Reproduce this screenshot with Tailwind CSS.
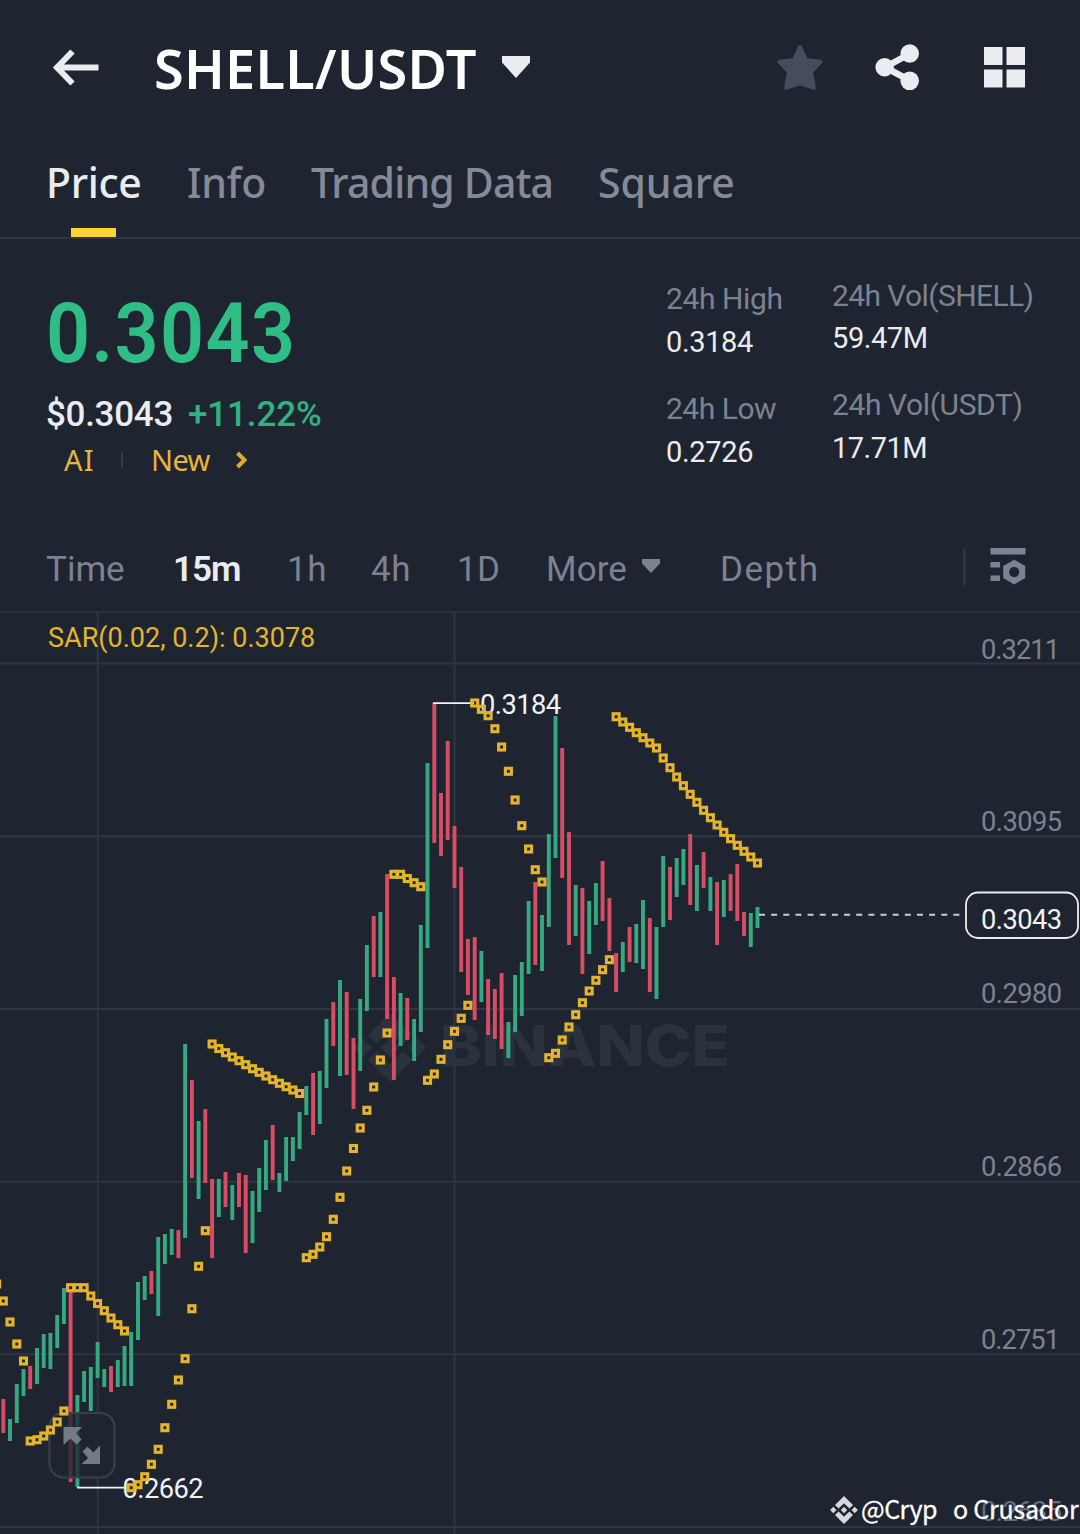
<!DOCTYPE html>
<html lang="en">
<head>
<meta charset="utf-8">
<title>SHELL/USDT</title>
<script src="https://cdn.jsdelivr.net/npm/@tailwindcss/browser@4"></script>
</head>
<body class="w-[1080px] h-[1534px] overflow-hidden bg-[#1f2530] text-[#eaecef] font-[Roboto,sans-serif]">

<!-- Header -->
<header class="flex items-center h-[134px] pl-[52px] pr-[54px] font-['Noto_Sans',sans-serif]">
  <svg class="w-12 h-10 shrink-0" viewBox="52 47.500 48 40" fill="none" stroke="#eaecef" stroke-width="6"><path d="M98.500 68H57M72.500 52 57 68l15.500 16"/></svg>
  <h1 class="ml-[54px] mt-0.5 w-[347px] text-[54px] leading-[60px] font-semibold tracking-[0.3px] text-white">SHELL/USDT</h1>
  <svg class="w-[30px] h-6 shrink-0" viewBox="0 0 30 24" fill="#eaecef"><path d="M1 1h28v6.500L15 23 1 7.500z"/></svg>
  <div class="ml-auto flex items-center">
    <svg class="w-[46px] h-[48px]" viewBox="0 0 46 48" fill="#464c59"><path d="M23 2c1 0 1.800.8 2.300 1.900l5 11.400 13.200 1.500c2 .2 2.600 2 1.300 3.400l-8.600 9.300 2.600 15c.3 1.900-1 2.900-2.700 2L23 42.500 9.900 46.500c-1.700.9-3-.1-2.700-2l2.600-15-8.600-9.300c-1.300-1.400-.7-3.200 1.300-3.400l13.200-1.500 5-11.400C21.200 2.800 22 2 23 2z"/></svg>
    <svg class="ml-[50px] w-[48px] h-[48px]" viewBox="873 43.500 48 48" fill="#eaecef"><path d="M909.500 54.500 885 67.700l24.500 13.200" fill="none" stroke="#eaecef" stroke-width="6.500"/><circle cx="909.700" cy="54" r="9.300"/><circle cx="884.600" cy="67.700" r="9.200"/><circle cx="909.700" cy="81.300" r="9.300"/></svg>
    <svg class="ml-[61px] w-11 h-11" viewBox="982 45.500 44 44" fill="#eaecef"><path d="M984 47.500h18.500v18H984zM1006.500 47.500H1025v18h-18.500zM984 70h18.500v18H984zM1006.500 70H1025v18h-18.500z"/></svg>
  </div>
</header>

<!-- Tabs -->
<nav class="relative flex h-[105px] pl-[46px] border-b-2 border-[#2f3641] text-[41px] leading-[96px] font-medium text-[#848a96] font-['Noto_Sans',sans-serif] whitespace-nowrap">
  <span class="w-[141px] tracking-[-0.3px] text-[#eaecef]">Price</span>
  <span class="w-[124px] tracking-[-0.2px]">Info</span>
  <span class="w-[287px] tracking-[-0.8px]">Trading Data</span>
  <span class="tracking-[-0.1px]">Square</span>
  <i class="absolute left-[71px] bottom-0 w-[45px] h-[9px] bg-[#fcd535]"></i>
</nav>

<!-- Ticker -->
<section class="flex h-[287px] whitespace-nowrap">
  <div class="w-[666px] pl-[45px] pt-[53px]">
    <div class="pl-px origin-left scale-x-[0.92] text-[84px] leading-[84px] font-semibold tracking-[1.4px] text-[#2ebd85]">0.3043</div>
    <div class="mt-[21px] pl-px flex text-[35px] leading-9 font-medium">
      <span class="w-[142px] tracking-[-0.3px]">$0.3043</span>
      <span class="tracking-[-0.12px] text-[#2fb380]">+11.22%</span>
    </div>
    <div class="mt-[9px] pl-[19px] flex items-center text-[29px] leading-9 text-[#e8b53a]">
      <span class="w-[57px] tracking-[1.2px] font-['Noto_Sans',sans-serif]">AI</span>
      <i class="w-[2px] h-3.5 bg-[#363c48]"></i>
      <span class="ml-7 w-[84px] tracking-[-0.6px] font-['Noto_Sans',sans-serif]">New</span>
      <svg class="w-3.5 h-5" viewBox="0 0 14 20" fill="none" stroke="#e0a92a" stroke-width="4"><path d="m2.500 3 7 7-7 7"/></svg>
    </div>
  </div>
  <div class="w-[166px] pt-[38px] leading-[43px] text-[29px]">
    <div class="text-[30px] tracking-[-0.4px] text-[#7c828f]">24h High</div>
    <div class="pt-px tracking-[-0.37px]">0.3184</div>
    <div class="mt-[23px] text-[30px] tracking-[-0.49px] text-[#7c828f]">24h Low</div>
    <div class="pt-px tracking-[-0.3px]">0.2726</div>
  </div>
  <div class="pt-[35px] leading-[43px] text-[29px]">
    <div class="text-[30px] tracking-[-0.6px] text-[#7c828f]">24h Vol(SHELL)</div>
    <div class="tracking-[-0.4px]">59.47M</div>
    <div class="mt-[23px] text-[30px] tracking-[-0.4px] text-[#7c828f]">24h Vol(USDT)</div>
    <div class="pt-px tracking-[-0.5px]">17.71M</div>
  </div>
</section>

<!-- Intervals -->
<nav class="flex items-center h-[87px] pl-[46px] pr-[54px] border-b-2 border-[#2a303b] text-[35px] text-[#7c828f] whitespace-nowrap">
  <span class="mt-1 w-[127px]">Time</span>
  <span class="mt-1 w-[114px] tracking-[-1px] font-semibold text-[#eaecef]">15m</span>
  <span class="mt-1 w-[84px] tracking-[0.6px]">1h</span>
  <span class="mt-1 w-[86px] tracking-[0.6px]">4h</span>
  <span class="mt-1 w-[89px] tracking-[0.3px]">1D</span>
  <span class="mt-1 w-[95px] tracking-[0.1px]">More</span>
  <svg class="w-5 h-4 mr-[59px] -mt-1.5" viewBox="0 0 20 16" fill="#7c828f"><path d="M1 1h18v4.500L10 15 1 5.500z"/></svg>
  <span class="mt-1 tracking-[1.5px]">Depth</span>
  <i class="ml-auto mr-6 -mt-1 w-[3px] h-9 bg-[#2f3641]"></i>
  <svg class="w-9 h-[38px] -mt-1.5" viewBox="990.500 547 36 38" fill="#7c828f"><path d="M991 548h35v6.500h-35zM991 562h9.500v5.500H991zM991 575.500h9.500v5.500H991z"/><path fill-rule="evenodd" d="m1014.700 559.800 11 6.300v12l-11 6.300-11-6.300v-12zM1014.700 567a5 5 0 1 0 0 10.200 5 5 0 0 0 0-10.200z"/></svg>
</nav>

<!-- Chart -->
<svg class="block w-[1080px] h-[921px]" viewBox="0 613 1080 921" font-family="Roboto, sans-serif" font-size="27.300">
  <g stroke="#2f3541" stroke-width="2">
    <path d="M0 663.500H1080M0 836.300H1080M0 1009H1080M0 1181.700H1080M0 1354.300H1080M0 1527H1080M97.700 613V1534M454.500 613V1534"/>
  </g>
  <g fill="#2c323d">
    <path d="m390 1013 22 22-9 9-13-13-13 13-9-9zM390 1082l-22-22 9-9 13 13 13-13 9 9zM390 1038l9.500 9.500-9.500 9.500-9.500-9.500zM363 1038l9 9.500-9 9.500-9-9.500zM417 1038l9 9.500-9 9.500-9-9.500z"/>
    <text x="440" y="1066" font-family="Inter, sans-serif" font-weight="800" font-size="56.500" textLength="290" lengthAdjust="spacingAndGlyphs">BINANCE</text>
  </g>
  <g id="candles" stroke-width="3.900"></g>
  <g fill="#f0f2f5">
    <text x="480" y="714" textLength="81">0.3184</text>
    <text x="122.500" y="1498" textLength="81">0.2662</text>
  </g>
  <path d="M433 703.200H474M77 1487.600H124" stroke="#f0f2f5" stroke-width="1.800"/>

  <!-- Fullscreen button -->
  <rect x="49.500" y="1413" width="65" height="64.500" rx="14" fill="#1f2530" fill-opacity=".78" stroke="#383e4a" stroke-width="2.200"/>
  <path fill="#747a87" d="M63.500 1427h18.500l-6 6 5.500 6.500-5 5-6-6-7 6.500zM100 1464H81.500l6.500-6-5.500-6.500 5-5 6 6 6.500-7z"/>

  <g id="sar" fill="none" stroke="#e3b42c" stroke-width="3.100"></g>
  <text x="48" y="647" font-size="27" fill="#e3b42c">SAR(0.02, 0.2): 0.3078</text>

  <g fill="#7c828f">
    <text x="981" y="658.500" textLength="79">0.3211</text>
    <text x="981" y="830.500" textLength="81">0.3095</text>
    <text x="981" y="1003.300" textLength="81">0.2980</text>
    <text x="981" y="1176" textLength="81">0.2866</text>
    <text x="981" y="1348.500" textLength="79">0.2751</text>
    <text x="981" y="1521" textLength="81" fill="#666c78">0.2635</text>
  </g>

  <path d="M759 914.800H960" stroke="#c9ccd2" stroke-width="2" stroke-dasharray="6 6.150"/>
  <rect x="966" y="892.500" width="112" height="45.500" rx="12" fill="#1f2530" stroke="#eaecef" stroke-width="1.800"/>
  <text x="981" y="929" textLength="81" fill="#f0f2f5">0.3043</text>

  <!-- Author tag -->
  <path fill="#d6d8dc" d="m844 1496 9 9-3.600 3.600-5.400-5.400-5.400 5.400L835 1505zM844 1524l-9-9 3.600-3.600 5.400 5.400 5.400-5.400 3.600 3.600zM844 1506.800l3.200 3.200-3.200 3.200-3.200-3.200zM833.300 1506.800l3.200 3.200-3.200 3.200-3.200-3.200zM854.700 1506.800l3.200 3.200-3.200 3.200-3.200-3.200z"/>
  <g fill="#fff" font-family="'Noto Sans CJK SC', sans-serif" font-size="25" stroke="#fff" stroke-width=".3">
    <text x="861" y="1519" letter-spacing="-0.510">@Cryp</text>
    <text x="953" y="1519" letter-spacing="-0.220">o Crusador</text>
  </g>
</svg>

<script>
// [colour, high y, low y] for each 15-minute bar
const bars = `r1399-1433 g1419-1441 g1384-1423 g1369-1396 r1366-1389 g1348-1384 g1334-1368 g1333-1369 g1315-1348 g1288-1324
r1290-1482 g1395-1487 g1371-1402 g1367-1411 g1342-1378 g1369-1387 r1366-1392 g1360-1387 g1346-1386 g1332-1386
g1282-1340 g1276-1300 r1271-1294 g1237-1316 g1234-1264 g1229-1255 r1230-1258 g1044-1238 r1080-1178 g1121-1199
r1109-1183 r1179-1258 g1179-1217 r1172-1207 g1185-1220 r1173-1207 r1175-1253 g1191-1243 g1168-1212 g1140-1190
r1125-1180 g1173-1192 g1137-1181 g1137-1161 g1112-1149 g1086-1115 r1073-1135 g1071-1124 g1019-1088 r1002-1046
g980-1076 r992-1075 r1038-1109 g999-1071 g945-1011 r916-977 g912-977 r874-1019 r977-1080 g993-1046
r998-1040 g1019-1061 g925-1032 g763-948 r703-843 r793-856 r741-840 r826-888 r867-972 r939-995
r937-1020 g951-1002 r979-1035 r989-1039 r973-1049 g1022-1058 g975-1032 g962-1016 g901-974 r882-965
g915-971 g834-927 g716-858 r748-878 r832-945 g885-936 r888-974 g901-954 g883-925 r861-921
r898-951 r953-992 g942-972 r927-962 g924-963 g900-969 r918-992 g927-999 g856-927 r867-920
g858-897 g849-885 r834-905 g865-911 r852-888 g877-911 r882-945 g880-917 r874-911 r864-921
r912-936 g913-947 g907-928`.split(/\s+/);
// Parabolic SAR y positions, starting one bar left of the visible range
const sar = [1284,1301,1322,1344,1361,1441,1439.7,1436,1430,1422,1411,1287.7,1287.7,1287.7,1296,1303.5,1310.7,1318,1324.7,1331,
1487.7,1484.7,1476.7,1464.3,1449.3,1427.7,1404.3,1380,1358.7,1308.7,1266.3,1230.7,
1044,1048.5,1052.7,1057,1060.7,1064.7,1068.7,1072.3,1076,1079.7,1083.3,1086.7,1090,1093.5,
1257.7,1254.3,1247,1236.7,1219.3,1197.3,1171,1148.5,1128,1110.3,1087,1060,1033,
874.3,874.3,878.5,882.7,886.7,1080.3,1074,1059.3,1044.7,1031.3,1018.3,1005.3,
703,709.3,715.7,728.7,747,771.3,800,825.7,849,869.7,882,
1057.7,1053.3,1040,1027,1014.7,1002.7,991,980.3,969.7,959.7,
716.7,722,727.3,732.7,737.7,743,748,758,767.7,777,785.7,794.3,802.3,810.3,817.7,825,832.3,838.7,845.3,851.3,857,863];
const x = i => (3.3 + i * 6.734).toFixed(1);
document.getElementById('candles').innerHTML = bars.map((b, i) => {
  const [hi, lo] = b.slice(1).split('-');
  return `<path d="M${x(i)} ${hi}V${lo}" stroke="${b[0] === 'g' ? '#35a980' : '#d84d63'}"/>`;
}).join('');
document.getElementById('sar').innerHTML = sar.map((y, i) =>
  `<rect x="${(x(i - 1) - 3).toFixed(1)}" y="${(y - 3).toFixed(1)}" width="6" height="6"/>`).join('');
</script>
</body>
</html>
